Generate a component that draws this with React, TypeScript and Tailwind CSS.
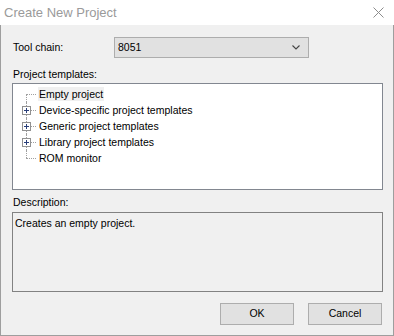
import React from 'react';

const rows = [
  { label: 'Empty project', expandable: false, selected: true },
  { label: 'Device-specific project templates', expandable: true },
  { label: 'Generic project templates', expandable: true },
  { label: 'Library project templates', expandable: true },
  { label: 'ROM monitor', expandable: false, last: true },
];

function Expander() {
  return (
    <svg width="9" height="9" viewBox="0 0 9 9" className="block">
      <rect x="0.5" y="0.5" width="8" height="8" fill="#fff" stroke="#919191" />
      <line x1="2" y1="4.5" x2="7" y2="4.5" stroke="#2a3f7a" />
      <line x1="4.5" y1="2" x2="4.5" y2="7" stroke="#2a3f7a" />
    </svg>
  );
}

export default function App() {
  return (
    <div className="w-[394px] h-[336px] flex flex-col bg-white text-[10.5px] text-black" style={{ fontFamily: '"Liberation Sans", Arial, sans-serif' }}>
      {/* Title bar */}
      <div className="h-[25px] flex items-center justify-between pl-[4px] pr-[10px] bg-white">
        <span className="text-[13px] text-[#9a9a9a] leading-none">Create New Project</span>
        <svg width="11" height="11" viewBox="0 0 11 11">
          <path d="M0.5 0.5 L10.5 10.5 M10.5 0.5 L0.5 10.5" stroke="#8c8c8c" strokeWidth="1" />
        </svg>
      </div>

      {/* Body */}
      <div className="flex-1 flex flex-col bg-[#f0f0f0] border-l border-r border-b border-[#9e9e9e] pl-[11px] pr-[10px]">
        <div className="flex items-center mt-[12px]">
          <span className="w-[102px] pl-[1px]">Tool chain:</span>
          <div className="w-[195px] h-[21px] flex items-center justify-between bg-[#e1e1e1] border border-[#adadad] pl-[3px] pr-[8px]">
            <span>8051</span>
            <svg width="8" height="5" viewBox="0 0 8 5">
              <path d="M0.5 0.5 L4 4 L7.5 0.5" fill="none" stroke="#444" strokeWidth="1.1" />
            </svg>
          </div>
        </div>

        <div className="mt-[10px] pl-[1px] leading-[13px]">Project templates:</div>
        <div className="mt-[2px] h-[107px] bg-white border border-[#828790] pt-[2px]">
          {rows.map((row, i) => (
            <div key={row.label} className="relative h-[16px] flex items-center">
              {/* dotted connector lines */}
              <div
                className={`absolute left-[13px] w-0 border-l border-dotted border-[#a0a0a0] ${i === 0 ? 'top-[8px] bottom-0' : row.last ? 'top-0 h-[8px]' : 'top-0 bottom-0'}`}
              />
              <div className="absolute left-[13px] top-[8px] w-[10px] h-0 border-t border-dotted border-[#a0a0a0]" />
              {row.expandable && (
                <div className="absolute left-[9px] top-[4px]">
                  <Expander />
                </div>
              )}
              <span className={`ml-[25px] px-[1px] leading-[14px] ${row.selected ? 'bg-[#f0f0f0]' : ''}`}>{row.label}</span>
            </div>
          ))}
        </div>

        <div className="mt-[6px] pl-[1px] leading-[13px]">Description:</div>
        <div className="mt-[3px] h-[80px] bg-[#f0f0f0] border border-[#828282] px-[2px] pt-[3px]">
          Creates an empty project.
        </div>

        <div className="flex justify-end gap-[14px] mt-[11px] mr-[1px]">
          <button className="w-[74px] h-[22px] bg-[#e1e1e1] border border-[#adadad]">OK</button>
          <button className="w-[74px] h-[22px] bg-[#e1e1e1] border border-[#adadad]">Cancel</button>
        </div>
      </div>
    </div>
  );
}
